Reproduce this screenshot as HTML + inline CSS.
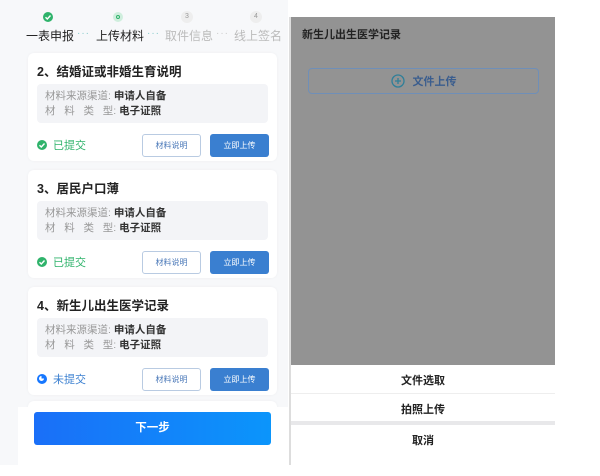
<!DOCTYPE html>
<html><head><meta charset="utf-8"><style>
*{margin:0;padding:0;box-sizing:border-box}
body{width:600px;height:476px;background:#fff;font-family:"Liberation Sans","Noto Sans CJK SC",sans-serif;position:relative;overflow:hidden}
.a{position:absolute}
#left{left:0;top:0;width:288px;height:465px;background:#f7f8fa}
.card{position:absolute;left:28px;width:249px;height:108px;background:#fff;border-radius:6px;box-shadow:0 0 3px rgba(0,0,0,.04)}
.card .t{position:absolute;left:9px;top:8px;font-size:12.5px;font-weight:bold;color:#222}
.card .info{position:absolute;left:9px;top:31px;width:231px;height:39px;background:#f3f4f7;border-radius:4px;font-size:10.5px;color:#999;padding:5px 0 0 8px;line-height:15px}
.card .info b{color:#333;font-weight:bold}
.st{position:absolute;left:9px;top:84px;font-size:11px;color:#2fb36b;display:flex;align-items:center;gap:6px}
.b1{position:absolute;left:114px;top:81px;width:59px;height:23px;border:1px solid #b9cbe2;border-radius:3px;font-size:8px;color:#4a78b8;text-align:center;line-height:21px;background:#fff}
.b2{position:absolute;left:182px;top:81px;width:59px;height:23px;background:#3a7fd0;border-radius:3px;font-size:8px;color:#fff;text-align:center;line-height:23px}
.ic{width:10px;height:10px;border-radius:50%;background:#2fb36b;position:relative}
.step{position:absolute;top:27px;font-size:12px;color:#222}
.dots{position:absolute;top:28px;font-size:10px;color:#8cc;letter-spacing:1px}
</style></head><body>
<div id="left" class="a">
 <div class="a" style="left:43px;top:12px;width:10px;height:10px;border-radius:50%;background:#2fb36b"><svg width="10" height="10" style="position:absolute"><path d="M2.5 5.2 L4.3 7 L7.5 3.5" stroke="#fff" stroke-width="1.4" fill="none"/></svg></div>
 <div class="a" style="left:113px;top:12px;width:10px;height:10px;border-radius:50%;background:#cfeedd"><div class="a" style="left:3px;top:3px;width:4px;height:4px;border-radius:50%;border:1.3px solid #2fb36b"></div></div>
 <div class="a" style="left:181px;top:11px;width:12px;height:12px;border-radius:50%;background:#eee;font-size:7px;color:#999;text-align:center;line-height:12px">3</div>
 <div class="a" style="left:250px;top:11px;width:12px;height:12px;border-radius:50%;background:#eee;font-size:7px;color:#999;text-align:center;line-height:12px">4</div>
 <div class="step" style="left:26px">一表申报</div>
 <div class="dots" style="left:77px">···</div>
 <div class="step" style="left:96px">上传材料</div>
 <div class="dots" style="left:147px">···</div>
 <div class="step" style="left:165px;color:#bbb">取件信息</div>
 <div class="dots" style="left:216px;color:#ccc">···</div>
 <div class="step" style="left:234px;color:#bbb">线上签名</div>

 <div class="card" style="top:53px"><div class="t">2、结婚证或非婚生育说明</div><div class="info">材料来源渠道: <b>申请人自备</b><br>材&nbsp;&nbsp;&nbsp;料&nbsp;&nbsp;&nbsp;类&nbsp;&nbsp;&nbsp;型: <b>电子证照</b></div><div class="st"><span class="ic"><svg width="10" height="10" style="position:absolute"><path d="M2.5 5.2 L4.3 7 L7.5 3.5" stroke="#fff" stroke-width="1.4" fill="none"/></svg></span>已提交</div><div class="b1">材料说明</div><div class="b2">立即上传</div></div>
 <div class="card" style="top:170px"><div class="t">3、居民户口薄</div><div class="info">材料来源渠道: <b>申请人自备</b><br>材&nbsp;&nbsp;&nbsp;料&nbsp;&nbsp;&nbsp;类&nbsp;&nbsp;&nbsp;型: <b>电子证照</b></div><div class="st"><span class="ic"><svg width="10" height="10" style="position:absolute"><path d="M2.5 5.2 L4.3 7 L7.5 3.5" stroke="#fff" stroke-width="1.4" fill="none"/></svg></span>已提交</div><div class="b1">材料说明</div><div class="b2">立即上传</div></div>
 <div class="card" style="top:287px"><div class="t">4、新生儿出生医学记录</div><div class="info">材料来源渠道: <b>申请人自备</b><br>材&nbsp;&nbsp;&nbsp;料&nbsp;&nbsp;&nbsp;类&nbsp;&nbsp;&nbsp;型: <b>电子证照</b></div><div class="st" style="color:#3a7fd0"><span class="ic" style="background:#1677ff"><span class="a" style="left:2px;top:2px;width:5px;height:5px;border-radius:50%;background:#fff;clip-path:polygon(0 0,50% 0,50% 50%,100% 50%,100% 100%,0 100%)"></span></span>未提交</div><div class="b1">材料说明</div><div class="b2">立即上传</div></div>
 <div class="card" style="top:401px;height:20px"></div>
 <div class="a" style="left:18px;top:407px;width:270px;height:58px;background:#fff"></div>
 <div class="a" style="left:34px;top:412px;width:237px;height:33px;border-radius:3px;background:linear-gradient(90deg,#1a6ff8,#0b95fb);color:#fff;font-size:11.5px;font-weight:bold;text-align:center;line-height:33px">下一步</div>
</div>
<div class="a" style="left:289px;top:17px;width:2px;height:448px;background:#ddd"></div>
<div class="a" style="left:291px;top:17px;width:264px;height:348px;background:#939393">
 <div class="a" style="left:11px;top:9px;font-size:11px;font-weight:bold;color:#222">新生儿出生医学记录</div>
 <div class="a" style="left:17px;top:51px;width:231px;height:26px;border:1px solid #6f8fb8;border-radius:4px;color:#3a5d8e;font-size:11px;font-weight:bold;display:flex;align-items:center;justify-content:center;gap:8px"><svg width="14" height="14"><circle cx="7" cy="7" r="6" stroke="#2f7f99" stroke-width="1.3" fill="none"/><path d="M7 4V10M4 7H10" stroke="#2f7f99" stroke-width="1.3"/></svg>文件上传</div>
</div>
<div class="a" style="left:291px;top:365px;width:264px;height:100px;background:#fff;font-size:11px;font-weight:bold;color:#222;text-align:center">
 <div class="a" style="left:0;top:7px;width:264px">文件选取</div>
 <div class="a" style="left:0;top:28px;width:264px;height:1px;background:#eee"></div>
 <div class="a" style="left:0;top:36px;width:264px">拍照上传</div>
 <div class="a" style="left:0;top:56px;width:264px;height:4px;background:#e8e8ea"></div>
 <div class="a" style="left:0;top:67px;width:264px">取消</div>
</div>
</body></html>
